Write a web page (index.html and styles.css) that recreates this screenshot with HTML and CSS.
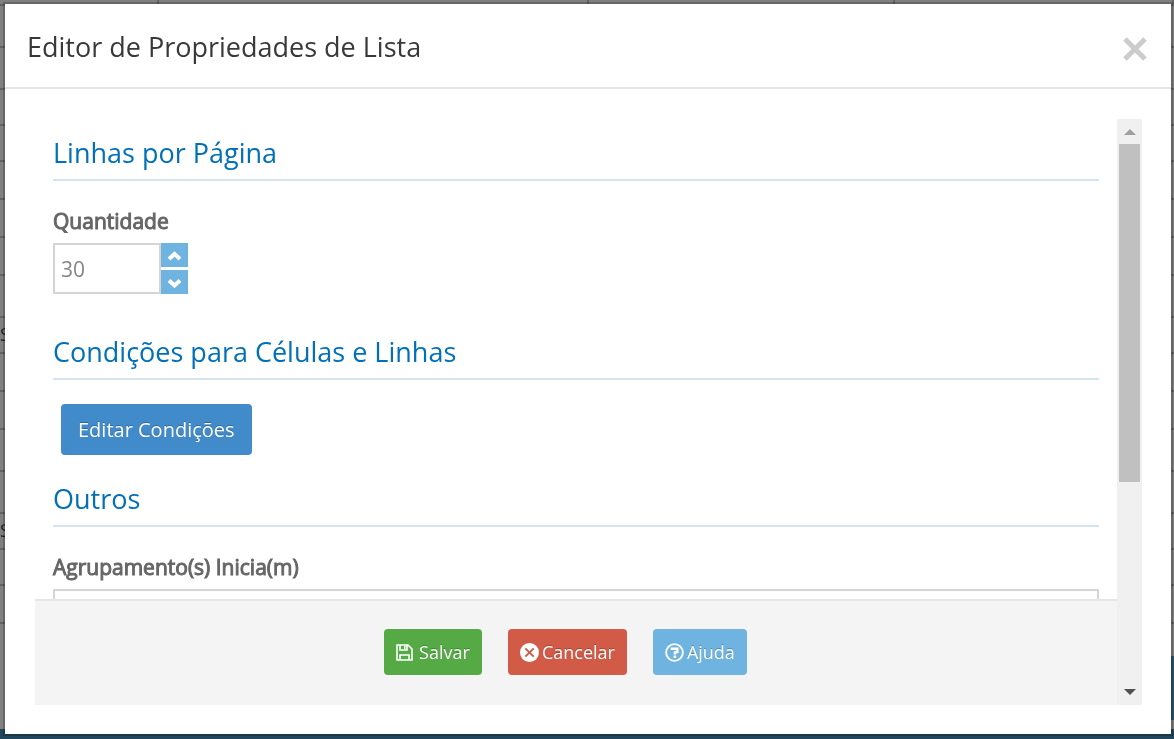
FILE: index.html
```html
<!DOCTYPE html>
<html lang="pt-BR">
<head>
    <meta charset="UTF-8">
    <meta name="viewport" content="width=device-width, initial-scale=1.0">
    <title>Editor de Propriedades de Lista</title>
    <link rel="stylesheet" href="styles.css">
</head>
<body>

    <!-- Page behind the dialog -->
    <div class="page-behind" aria-hidden="true">
        <div class="row first"><span></span><span></span><span></span><span></span></div>
        <div class="row tall"></div>
        <div class="row tall"></div>
        <div class="row short"></div>
        <div class="row short"></div>
        <div class="row"></div>
        <div class="row"></div>
        <div class="row"></div>
        <div class="row tall"></div>
        <div class="row short">S</div>
        <div class="row"></div>
        <div class="row"></div>
        <div class="row tall"></div>
        <div class="row tall"></div>
        <div class="row short">S</div>
        <div class="row short"></div>
        <div class="row"></div>
        <div class="side-block"></div>
        <div class="page-footer"></div>
    </div>

    <div class="modal" role="dialog" aria-labelledby="modalTitle">
        <header class="modal-header">
            <h1 id="modalTitle">Editor de Propriedades de Lista</h1>
            <button type="button" class="close" aria-label="Fechar">
                <svg width="24" height="24" viewBox="0 0 24 24"><path d="M2 2L22 22M22 2L2 22" stroke="#ccc" stroke-width="5"/></svg>
            </button>
        </header>

        <div class="modal-body">
            <form class="panel">
                <div class="fields">
                    <h2>Linhas por Página</h2>
                    <label for="quantidade">Quantidade</label>
                    <div class="spinner">
                        <input type="text" id="quantidade" value="30">
                        <div class="spinner-buttons">
                            <button type="button" aria-label="Aumentar">
                                <svg width="15" height="10" viewBox="0 0 15 10"><path d="M2 8L7.5 3L13 8"/></svg>
                            </button>
                            <button type="button" aria-label="Diminuir">
                                <svg width="15" height="10" viewBox="0 0 15 10"><path d="M2 2.5L7.5 7.5L13 2.5"/></svg>
                            </button>
                        </div>
                    </div>

                    <h2>Condições para Células e Linhas</h2>
                    <button type="button" class="btn btn-primary">Editar Condições</button>

                    <h2>Outros</h2>
                    <label for="agrupamento">Agrupamento(s) Inicia(m)</label>
                    <input type="text" id="agrupamento">
                </div>

                <footer class="actions">
                    <button type="submit" class="btn btn-save">
                        <svg width="17" height="17" viewBox="0 0 17 17" fill="none" stroke="#fff" stroke-width="1.6">
                            <path d="M1 1H12L16 5V16H1Z"/>
                            <path d="M4 1V6H11V1M4 16V11H13V16"/>
                            <path d="M8.8 2V5"/>
                        </svg>
                        Salvar
                    </button>
                    <button type="button" class="btn btn-cancel">
                        <svg width="19" height="19" viewBox="0 0 20 20">
                            <circle cx="10" cy="10" r="10" fill="#fff"/>
                            <path d="M5.6 5.6L14.4 14.4M14.4 5.6L5.6 14.4" stroke="#d15b47" stroke-width="2"/>
                        </svg>
                        Cancelar
                    </button>
                    <button type="button" class="btn btn-help">
                        <svg width="19" height="19" viewBox="0 0 20 20" fill="none" stroke="#fff">
                            <circle cx="10" cy="10" r="8.8" stroke-width="2"/>
                            <path d="M6 6H13V9.4L10.4 10V12" stroke-width="2.6"/>
                            <path d="M10.4 13.2V15.8" stroke-width="2.8"/>
                        </svg>
                        Ajuda
                    </button>
                </footer>
            </form>

            <div class="scrollbar" aria-hidden="true">
                <svg width="12" height="6" viewBox="0 0 12 6"><path d="M0 6L6 0L12 6Z" fill="#a0a0a0"/></svg>
                <div class="track"><div class="thumb"></div></div>
                <svg width="12" height="6" viewBox="0 0 12 6"><path d="M0 0L6 6L12 0Z" fill="#505050"/></svg>
            </div>
        </div>
    </div>

</body>
</html>
```
FILE: styles.css
```css
* {
    box-sizing: border-box;
}

body {
    font-family: "Open Sans", sans-serif;
    margin: 0;
    padding: 4px 3px 5px 5px;
    height: 100vh;
    display: flex;
    background-color: #808080;
    color: #393939;
}

h1, h2 {
    font-weight: 400;
    margin: 0;
}

button {
    font-family: inherit;
    border: none;
    padding: 0;
    cursor: pointer;
}

svg {
    display: block;
    flex: none;
}

/* Dimmed page under the dialog */
.page-behind {
    position: fixed;
    inset: 0;
    z-index: -1;
    overflow: hidden;
    color: #222;
    font-size: 18px;
    line-height: 32px;
}

.row {
    height: 38px;
    border-bottom: 2px solid #636363;
}

.row.tall {
    height: 42px;
}

.row.short {
    height: 36px;
}

.row.first {
    height: 6px;
    display: grid;
    grid-template-columns: 159px 430px 306px 1fr;
}

.row.first span {
    border-right: 2px solid #636363;
}

.side-block {
    position: absolute;
    right: 0;
    bottom: 19px;
    width: 20px;
    height: 64px;
    background-color: #2a5570;
}

.page-footer {
    position: absolute;
    left: 0;
    right: 0;
    bottom: 0;
    height: 10px;
    background-color: #22465c;
}

/* Dialog */
.modal {
    flex: 1;
    min-width: 0;
    display: flex;
    flex-direction: column;
    background-color: #fff;
    box-shadow: 0 0 0 2px rgba(0, 0, 0, 0.2);
}

.modal-header {
    display: flex;
    justify-content: space-between;
    align-items: center;
    height: 85px;
    padding: 0 24px 0 22px;
    border-bottom: 2px solid #e5e5e5;
}

.modal-header h1 {
    font-size: 27px;
    line-height: 40px;
    padding-top: 2px;
}

.close {
    background: none;
    padding-top: 6px;
}

.modal-body {
    flex: 1;
    min-height: 0;
    display: flex;
    padding: 30px 29px 29px 30px;
}

.panel {
    flex: 1;
    min-width: 0;
    display: flex;
    flex-direction: column;
}

.fields {
    flex: 1;
    min-height: 0;
    overflow: hidden;
    padding: 12px 18px 0;
}

.fields h2 {
    color: #0070b8;
    font-size: 27px;
    line-height: 44px;
    padding-bottom: 4px;
    margin-bottom: 24px;
    border-bottom: 2px solid #d4e3ee;
}

.fields label {
    display: block;
    color: #666;
    font-size: 21px;
    line-height: 32px;
    margin-bottom: 6px;
    -webkit-text-stroke: 1px #666; /* Heavier without getting wider */
}

.fields input {
    display: block;
    width: 100%;
    height: 51px;
    border: 2px solid #d5d5d5;
    padding: 0 6px;
    color: #858585;
    font-family: inherit;
    font-size: 21px;
}

.spinner {
    display: flex;
    width: 135px;
    height: 51px;
    margin-bottom: 36px;
}

.spinner-buttons {
    flex: none;
    width: 27px;
    display: flex;
    flex-direction: column;
    gap: 3px;
}

.spinner-buttons button {
    flex: 1;
    display: flex;
    align-items: center;
    justify-content: center;
    padding-top: 2px;
    background-color: #6fb3e0;
}

.spinner-buttons path {
    fill: none;
    stroke: #fff;
    stroke-width: 4;
}

.btn {
    display: flex;
    align-items: center;
    height: 46px;
    padding: 0 12px;
    border-radius: 4px;
    color: #fff;
    font-size: 18px;
    text-shadow: 0 -1px 0 rgba(0, 0, 0, 0.25);
}

.btn-primary {
    height: 51px;
    margin: 0 8px 22px;
    padding: 0 17px;
    background-color: #428bca;
    font-size: 20px;
}

.actions {
    display: flex;
    justify-content: center;
    align-items: center;
    gap: 26px;
    height: 106px;
    padding: 0 21px 2px 0;
    border-top: 2px solid #e5e5e5;
    background-color: #f4f4f4;
}

.btn-save {
    gap: 6px;
    background-color: #55aa46;
}

.btn-cancel {
    gap: 3px;
    background-color: #d15b47;
}

.btn-help {
    gap: 3px;
    background-color: #6fb3e0;
}

/* Scrollbar */
.scrollbar {
    width: 25px;
    display: flex;
    flex-direction: column;
    align-items: center;
    gap: 9px;
    padding: 10px 0;
    background-color: #f0f0f0;
}

.track {
    flex: 1;
    width: 21px;
}

.thumb {
    height: 63%;
    background-color: #c0c0c0;
}
```
